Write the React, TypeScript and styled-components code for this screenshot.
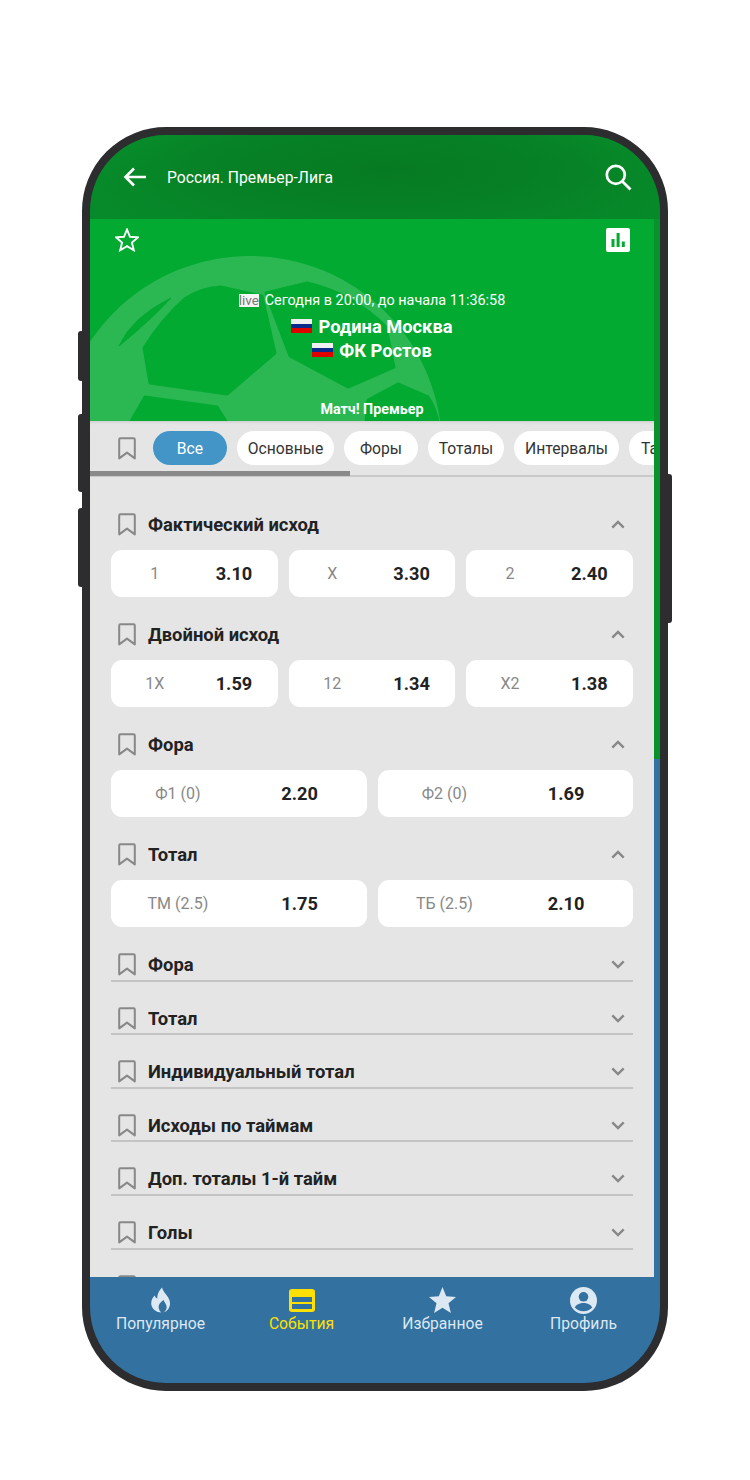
import React from "react";
import styled, { createGlobalStyle } from "styled-components";

const Global = createGlobalStyle`
  html, body { margin: 0; padding: 0; background: #fff; }
  body { font-family: Roboto, "Liberation Sans", sans-serif; }
  * { box-sizing: border-box; }
`;

const Page = styled.div`
  width: 750px;
  height: 1480px;
  padding: 127px 0 0 82px;
  overflow: hidden;
`;

const Phone = styled.div`
  position: relative;
  width: 586px;
  height: 1264px;
`;

const SideKey = styled.div<{ $side: "left" | "right"; $top: number; $h: number }>`
  position: absolute;
  top: ${(p) => p.$top}px;
  height: ${(p) => p.$h}px;
  width: 6px;
  background: #2d2d2f;
  ${(p) => (p.$side === "left" ? "left: -4px; border-radius: 3px 0 0 3px;" : "right: -4px; border-radius: 0 3px 3px 0;")}
`;

const Frame = styled.div`
  position: relative;
  width: 586px;
  height: 1264px;
  border: 8px solid #2d2d2f;
  border-radius: 84px;
  background: #2d2d2f;
  overflow: hidden;
  display: flex;
  flex-direction: column;
`;

const Header = styled.header`
  height: 84px;
  flex: none;
  display: flex;
  align-items: center;
  padding: 0 28px 0 33px;
  color: #fff;
  background:
    radial-gradient(ellipse 60% 100% at 52% 42%, #067a22 0%, #078226 55%, rgba(7, 140, 42, 0) 100%),
    linear-gradient(180deg, #07932d 0%, #068a2a 100%);
`;

const HeaderTitle = styled.div`
  flex: 1;
  margin-left: 20px;
  font-size: 15.7px;
  color: #fff;
`;

const Middle = styled.div`
  flex: 1;
  min-height: 0;
  display: flex;
  background: linear-gradient(180deg, #07922b 0, #07922b 540px, #3371a1 540px);
`;

const Main = styled.main`
  width: 564px;
  flex: none;
  overflow: hidden;
  display: flex;
  flex-direction: column;
  background: #e5e5e5;
`;

const Hero = styled.section`
  position: relative;
  height: 202px;
  flex: none;
  background: #02aa32;
  overflow: hidden;
  color: #fff;
  display: flex;
  flex-direction: column;
  align-items: center;
`;

const BallArt = styled.svg`
  position: absolute;
  left: 0;
  top: 0;
`;

const HeroTop = styled.div`
  position: relative;
  align-self: stretch;
  height: 60px;
  padding: 9px 24px 0 25px;
  display: flex;
  justify-content: space-between;
  align-items: flex-start;
`;

const LiveLine = styled.div`
  position: relative;
  margin-top: 12px;
  height: 18px;
  display: flex;
  align-items: center;
  font-size: 14.4px;
`;

const LiveBadge = styled.span`
  background: #f4f4f4;
  color: #777;
  font-size: 13.5px;
  line-height: 13px;
  height: 13px;
  width: 20px;
  text-align: center;
  margin-right: 6px;
`;

const Team = styled.div<{ $offset: number }>`
  position: relative;
  height: 24px;
  display: flex;
  align-items: center;
  font-size: 18.3px;
  font-weight: 700;
  margin-top: ${(p) => p.$offset}px;
`;

const Flag = styled.span`
  width: 21px;
  height: 14px;
  margin-right: 6px;
  background: linear-gradient(180deg, #f0f0f0 0 33%, #0b2a8c 33% 66%, #e00000 66%);
`;

const League = styled.div`
  position: absolute;
  bottom: 4px;
  left: 0;
  right: 0;
  text-align: center;
  font-size: 14.3px;
  font-weight: 700;
`;

const Tabs = styled.nav`
  position: relative;
  height: 56px;
  flex: none;
  display: flex;
  align-items: center;
  gap: 10px;
  padding: 0 0 2px 28px;
  overflow: hidden;
  background: #e5e5e5;
  box-shadow: inset 0 3px 3px -2px rgba(0, 0, 0, 0.12);

  &::after {
    content: "";
    position: absolute;
    left: 0;
    right: 0;
    bottom: 0;
    height: 2px;
    background: #c9c9c9;
  }
`;

const TabBookmark = styled.div`
  display: flex;
  margin-right: 7px;
  flex: none;
`;

const Pill = styled.div<{ $active?: boolean; $w: number }>`
  flex: none;
  width: ${(p) => p.$w}px;
  height: 34px;
  border-radius: 17px;
  display: flex;
  align-items: center;
  justify-content: center;
  font-size: 15.7px;
  white-space: nowrap;
  overflow: hidden;
  background: ${(p) => (p.$active ? "#4395c8" : "#fff")};
  color: ${(p) => (p.$active ? "#fff" : "#333")};
`;

const ScrollThumb = styled.div`
  position: absolute;
  z-index: 1;
  left: 0;
  bottom: 1px;
  width: 260px;
  height: 5px;
  background: #8a8a8a;
`;

const Markets = styled.div`
  flex: 1;
  min-height: 0;
  overflow: hidden;
  padding: 27px 21px 0;
`;

const Section = styled.section`
  margin-bottom: 17px;
`;

const TitleRow = styled.div`
  height: 40px;
  display: flex;
  align-items: center;
  padding: 0 8px 0 7px;
  margin-bottom: 6px;
`;

const CollapsedRow = styled.div`
  height: 37.6px;
  display: flex;
  align-items: center;
  padding: 5.4px 8px 0 7px;
  border-bottom: 2px solid #c4c4c4;
  margin-bottom: 16px;
`;

const Title = styled.div`
  flex: 1;
  margin-left: 12px;
  font-size: 18.4px;
  font-weight: 700;
  color: #222;
`;

const Odds = styled.div<{ $cols: number }>`
  display: grid;
  grid-template-columns: repeat(${(p) => p.$cols}, 1fr);
  gap: 11px;
`;

const OddButton = styled.div<{ $pad: number }>`
  height: 47px;
  border-radius: 11px;
  background: #fff;
  padding: 0 ${(p) => p.$pad}px;
  display: grid;
  grid-template-columns: 1fr 1fr;
  align-items: center;
  text-align: center;
`;

const OddLabel = styled.span`
  font-size: 16px;
  color: #888;
`;

const OddValue = styled.span`
  font-size: 18.2px;
  font-weight: 700;
  color: #222;
`;

const BottomNav = styled.footer`
  height: 106px;
  flex: none;
  background: #3371a1;
  padding: 8px 6px 0 0;
  display: grid;
  grid-template-columns: repeat(4, 141px);
`;

const NavItem = styled.div<{ $active?: boolean }>`
  display: flex;
  flex-direction: column;
  align-items: center;
  color: ${(p) => (p.$active ? "#ffe000" : "#dce8f2")};
  font-size: 15.7px;
`;

const NavIcon = styled.div`
  height: 30px;
  display: flex;
  align-items: center;
  justify-content: center;
`;

const NavText = styled.div`
  line-height: 18px;
`;

const Bookmark = () => (
  <svg width="18" height="23" viewBox="0 0 18 23" fill="none" style={{ flex: "none" }}>
    <path d="M1.2 2.4c0-.7.5-1.2 1.2-1.2h13.2c.7 0 1.2.5 1.2 1.2v19L9 15.6l-7.8 5.8z" stroke="#888" strokeWidth="2" strokeLinejoin="round" />
  </svg>
);

const Chevron = ({ up }: { up?: boolean }) => (
  <svg width="14" height="9" viewBox="0 0 14 9" fill="none" style={{ flex: "none" }}>
    <path d={up ? "M1.3 7.7L7 2l5.7 5.7" : "M1.3 1.3L7 7l5.7-5.7"} stroke="#888" strokeWidth="2.4" />
  </svg>
);

const BackIcon = () => (
  <svg width="24" height="22" viewBox="0 0 24 22" fill="none">
    <path d="M23 11H3M11 2.5L2.5 11l8.5 8.5" stroke="#fff" strokeWidth="2.6" />
  </svg>
);

const SearchIcon = () => (
  <svg width="27" height="27" viewBox="0 0 27 27" fill="none">
    <circle cx="10.8" cy="10.8" r="9" stroke="#fff" strokeWidth="2.7" />
    <path d="M17.2 17.2l8.3 8.3" stroke="#fff" strokeWidth="2.8" />
  </svg>
);

const StarOutline = () => (
  <svg width="24" height="24" viewBox="0 0 24 24" fill="none">
    <path d="M12 1.5l3 7.3 7.900.6-6 5.100 1.900 7.700L12 18.100l-6.800 4.100 1.900-7.700-6-5.100 7.900-.6z" stroke="#fff" strokeWidth="1.9" strokeLinejoin="miter" />
  </svg>
);

const StatsIcon = () => (
  <svg width="24" height="24" viewBox="0 0 24 24">
    <rect width="24" height="24" rx="2" fill="#fff" />
    <rect x="5.500" y="11" width="3" height="8" fill="#02aa32" />
    <rect x="10.600" y="5" width="3" height="14" fill="#02aa32" />
    <rect x="15.800" y="13.500" width="3" height="5.500" fill="#02aa32" />
  </svg>
);

const FlameIcon = () => (
  <svg width="20" height="26" viewBox="0 0 20 26">
    <path
      fill="#dce8f2"
      d="M11 .5c.9 3.4 3 5.600 5 8.300 1.900 2.600 3.300 5.300 3 8.500-.4 4.500-3.500 7.600-6.800 8.200 2.600-1.500 3.800-3.900 3.300-6.400-.5-2.300-2-3.900-3.100-6.200-1.500 1.300-3.600 2.800-4.500 5.300-.8 2.600.3 5.200 2.400 7.300C5.500 25.300 1.300 22.500.4 18c-.8-4 1.200-7.200 3.300-9.400.5 1.500 1.300 2.600 2.600 3.100C5.800 7.900 8 3.800 11 .5z"
    />
  </svg>
);

const EventsIcon = () => (
  <svg width="26" height="23" viewBox="0 0 26 23">
    <rect width="26" height="23" rx="3" fill="#ffe000" />
    <rect x="3" y="8" width="20" height="5" fill="#3371a1" />
    <rect x="3" y="15" width="20" height="5" fill="#3371a1" />
  </svg>
);

const StarSolid = () => (
  <svg width="27" height="26" viewBox="0 0 27 26">
    <path fill="#dce8f2" d="M13.500 0l3.700 9.300 9.800.7-7.500 6.300 2.400 9.700-8.400-5.300L5.100 26l2.400-9.700L0 10l9.800-.7z" />
  </svg>
);

const ProfileIcon = () => (
  <svg width="27" height="27" viewBox="0 0 27 27">
    <circle cx="13.500" cy="13.500" r="13.500" fill="#dce8f2" />
    <circle cx="13.500" cy="9.800" r="4.800" fill="#3371a1" />
    <path fill="#3371a1" d="M4.800 20.500c1.300-3 5-4.500 8.700-4.500s7.400 1.500 8.700 4.500c-2 2.400-5.100 3.800-8.700 3.800s-6.700-1.400-8.700-3.800z" />
  </svg>
);

const Ball = () => (
  <BallArt width="564" height="202" viewBox="0 0 564 202">
    <circle cx="160" cy="229" r="192" fill="#fff" fillOpacity="0.165" />
    <g fill="#02aa32" stroke="#02aa32" strokeWidth="3" strokeLinejoin="round">
      <path d="M54 129Q72 100 96 79Q112 69 131 68L172 77L185 134L137 175L60 164Z" />
      <path d="M29 127Q42 98 81 79Q62 100 29 127Z" strokeWidth="1" />
      <path d="M176 74L217 64Q262 74 296 108L304 148L258 168L200 137Z" />
      <path d="M278 181L308 165L338 178Q346 190 348 204H276Z" />
      <path d="M40 204L55 178L127 188L137 204Z" />
    </g>
  </BallArt>
);

type OddT = [string, string];

const markets: { title: string; odds: OddT[] }[] = [
  { title: "Фактический исход", odds: [["1", "3.10"], ["X", "3.30"], ["2", "2.40"]] },
  { title: "Двойной исход", odds: [["1X", "1.59"], ["12", "1.34"], ["X2", "1.38"]] },
  { title: "Фора", odds: [["Ф1 (0)", "2.20"], ["Ф2 (0)", "1.69"]] },
  { title: "Тотал", odds: [["ТМ (2.5)", "1.75"], ["ТБ (2.5)", "2.10"]] },
];

const collapsed = ["Фора", "Тотал", "Индивидуальный тотал", "Исходы по таймам", "Доп. тоталы 1-й тайм", "Голы", ""];

const pills: [string, number][] = [
  ["Основные", 97],
  ["Форы", 74],
  ["Тоталы", 76],
  ["Интервалы", 105],
  ["Таймы", 74],
];

export default function App() {
  return (
    <Page>
      <Global />
      <Phone>
        <SideKey $side="left" $top={204} $h={50} />
        <SideKey $side="left" $top={287} $h={78} />
        <SideKey $side="left" $top={381} $h={79} />
        <SideKey $side="right" $top={347} $h={149} />
        <Frame>
          <Header>
            <BackIcon />
            <HeaderTitle>Россия. Премьер-Лига</HeaderTitle>
            <SearchIcon />
          </Header>
          <Middle>
            <Main>
              <Hero>
                <Ball />
                <HeroTop>
                  <StarOutline />
                  <StatsIcon />
                </HeroTop>
                <LiveLine>
                  <LiveBadge>live</LiveBadge>
                  Сегодня в 20:00, до начала 11:36:58
                </LiveLine>
                <Team $offset={5}>
                  <Flag />
                  Родина Москва
                </Team>
                <Team $offset={0}>
                  <Flag />
                  ФК Ростов
                </Team>
                <League>Матч! Премьер</League>
              </Hero>
              <Tabs>
                <TabBookmark>
                  <Bookmark />
                </TabBookmark>
                <Pill $active $w={74}>Все</Pill>
                {pills.map(([t, w]) => (
                  <Pill key={t} $w={w}>{t}</Pill>
                ))}
                <ScrollThumb />
              </Tabs>
              <Markets>
                {markets.map((m) => (
                  <Section key={m.title}>
                    <TitleRow>
                      <Bookmark />
                      <Title>{m.title}</Title>
                      <Chevron up />
                    </TitleRow>
                    <Odds $cols={m.odds.length}>
                      {m.odds.map(([l, v]) => (
                        <OddButton key={l} $pad={m.odds.length === 3 ? 4 : 6}>
                          <OddLabel>{l}</OddLabel>
                          <OddValue>{v}</OddValue>
                        </OddButton>
                      ))}
                    </Odds>
                  </Section>
                ))}
                {collapsed.map((t, i) => (
                  <CollapsedRow key={i}>
                    <Bookmark />
                    <Title>{t}</Title>
                    <Chevron />
                  </CollapsedRow>
                ))}
              </Markets>
            </Main>
          </Middle>
          <BottomNav>
            <NavItem>
              <NavIcon><FlameIcon /></NavIcon>
              <NavText>Популярное</NavText>
            </NavItem>
            <NavItem $active>
              <NavIcon><EventsIcon /></NavIcon>
              <NavText>События</NavText>
            </NavItem>
            <NavItem>
              <NavIcon><StarSolid /></NavIcon>
              <NavText>Избранное</NavText>
            </NavItem>
            <NavItem>
              <NavIcon><ProfileIcon /></NavIcon>
              <NavText>Профиль</NavText>
            </NavItem>
          </BottomNav>
        </Frame>
      </Phone>
    </Page>
  );
}
